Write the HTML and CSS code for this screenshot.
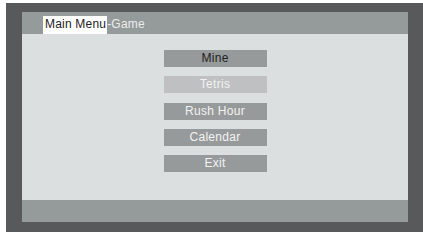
FILE: index.html
```html
<!DOCTYPE html>
<html lang="en">
<head>
  <meta charset="UTF-8" />
  <title>Main Menu - Game</title>
  <link rel="stylesheet" href="styles.css">
</head>
<body>
  <div class="frame">
    <div class="panel">
      <div class="title-bar">
        <span class="crumb">Main Menu</span><span class="sub">-Game</span>
      </div>

      <!-- game list -->
      <div class="menu">
        <div class="item active">Mine</div>
        <div class="item light">Tetris</div>
        <div class="item">Rush Hour</div>
        <div class="item">Calendar</div>
        <div class="item">Exit</div>
      </div>

      <div class="footer"></div>
    </div>
  </div>
</body>
</html>
```

FILE: styles.css
```css
* { box-sizing: border-box; }
body {
  margin: 0;
  background: #fff;
  font-family: "Liberation Sans", Arial, sans-serif;
}

.frame {
  margin: 3px 0 0 6px;
  width: 417px;
  height: 229px;
  background: #58595b;
  padding: 9px 15px 10px 16px;
}

.panel {
  height: 210px;
  display: flex;
  flex-direction: column;
  background: #dcdfe0;
}

.title-bar {
  height: 22px;
  background: #959a9b;
  padding: 3px 0 0 21px;
  font-size: 12px;
  letter-spacing: 0.2px;
  display: flex;
  align-items: center;
}

.crumb {
  background: #fff;
  color: #222;
  padding: 2px 1px 3px 2px;
  line-height: 13px;
}

.sub {
  color: #eceeee;
  line-height: 13px;
}

.menu {
  flex: 1;
  display: flex;
  flex-direction: column;
  align-items: center;
  padding-top: 16px;
  gap: 9.25px;
}

.item {
  width: 103px;
  height: 17px;
  line-height: 17px;
  text-align: center;
  font-size: 12px;
  letter-spacing: 0.3px;
  background: #979a9b;
  color: #f2f3f3;
}

.item.active { color: #222; }
.item.light { background: #bec0c2; }

.footer {
  height: 22px;
  background: #959a9b;
}
```
